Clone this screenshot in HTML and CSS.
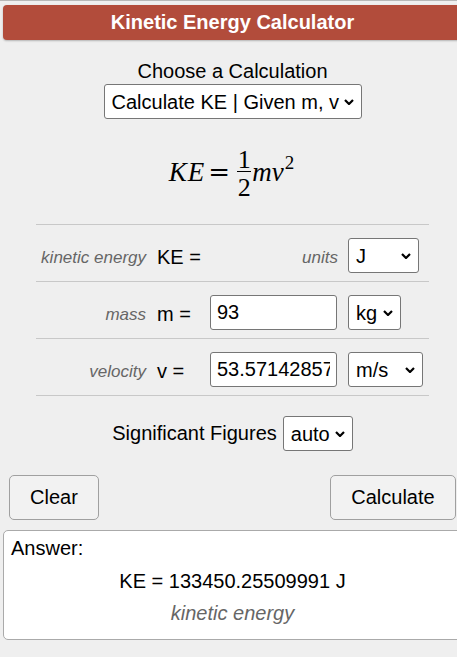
FILE: index.html
```html
<!DOCTYPE html>
<html>
<head>
<meta charset="utf-8">
<link rel="stylesheet" href="styles.css">
</head>
<body>
<div class="topline"></div>
<div class="calc">
  <div class="header">Kinetic Energy Calculator</div>
  <div class="choose">
    <div class="choose-label">Choose a Calculation</div>
    <select class="sel sel-calc"><option>Calculate KE | Given m, v</option></select>
  </div>
  <div class="formula">
    <span class="mi">K</span><span class="mi e">E</span><span class="eq">=</span><span class="frac"><span class="num">1</span><span class="bar"></span><span class="den">2</span></span><span class="mi m">m</span><span class="mi">v</span><sup class="sup">2</sup>
  </div>
  <div class="rows">
    <div class="row">
      <span class="lbl">kinetic energy</span>
      <span class="var">KE =</span>
      <span class="units-lbl">units</span>
      <select class="sel rsel sel-j"><option>J</option></select>
    </div>
    <div class="row">
      <span class="lbl">mass</span>
      <span class="var">m =</span>
      <input class="inp" type="text" value="93">
      <select class="sel rsel sel-kg"><option>kg</option></select>
    </div>
    <div class="row">
      <span class="lbl">velocity</span>
      <span class="var">v =</span>
      <input class="inp" type="text" value="53.571428571429">
      <select class="sel rsel sel-ms"><option>m/s</option></select>
    </div>
  </div>
  <div class="sig">
    <span>Significant Figures</span>
    <select class="sel sel-auto"><option>auto</option></select>
  </div>
  <div class="buttons">
    <button class="btn btn-clear">Clear</button>
    <button class="btn btn-calc">Calculate</button>
  </div>
  <div class="answer">
    <div class="ans-title">Answer:</div>
    <div class="ans-value">KE = 133450.25509991 J</div>
    <div class="ans-desc">kinetic energy</div>
  </div>
</div>
</body>
</html>
```
FILE: styles.css
```css
html, body {
  margin: 0;
  padding: 0;
  overflow: hidden;
}
body {
  background: #efefef;
  font-family: "Liberation Sans", Arial, sans-serif;
  color: #000;
  width: 457px;
  height: 657px;
}
.topline {
  height: 1px;
  background: #b8b8b8;
}
.calc {
  margin-left: 3px;
  margin-top: 4px;
  width: 459px;
}
.header {
  height: 35px;
  line-height: 35px;
  background: #b24c3b;
  color: #fff;
  font-weight: bold;
  font-size: 20px;
  text-align: center;
  border-radius: 4px;
  box-shadow: 0 1px 2px rgba(0,0,0,0.25);
}
.choose {
  margin-top: 20px;
  display: flex;
  flex-direction: column;
  align-items: center;
}
.choose-label {
  font-size: 20px;
  line-height: 23px;
}
.sel {
  -webkit-appearance: none;
  appearance: none;
  font-family: "Liberation Sans", Arial, sans-serif;
  font-size: 20px;
  height: 35px;
  color: #000;
  border: 1px solid #767676;
  border-radius: 3px;
  padding: 0 0 0 7px;
  background: #fff url("data:image/svg+xml;utf8,<svg xmlns='http://www.w3.org/2000/svg' width='10' height='6' viewBox='0 0 10 6'><path d='M1 1 L5 5 L9 1' fill='none' stroke='black' stroke-width='2.2'/></svg>") no-repeat right 7px center;
}
.sel-calc {
  width: 258px;
  margin-top: 1px;
  padding-left: 7px;
}
.formula {
  height: 105px;
  line-height: 105px;
  padding-top: 1px;
  box-sizing: border-box;
  text-align: center;
  font-family: "Liberation Serif", "Times New Roman", serif;
  font-size: 27px;
  white-space: nowrap;
  padding-right: 2px;
}
.mi {
  font-style: italic;
}
.mi.e {
  margin-left: 1px;
}
.mi.m {
  margin-left: 1px;
}
.eq {
  font-family: "DejaVu Serif", serif;
  font-size: 26px;
  margin: 0 7px 0 4px;
}
.frac {
  display: inline-flex;
  flex-direction: column;
  align-items: center;
  vertical-align: 13px;
  line-height: 19px;
  font-size: 26px;
}
.frac .bar {
  width: 14px;
  height: 1px;
  background: #000;
  margin: 2px 0 6px;
}
.sup {
  font-size: 19px;
  line-height: 0;
  vertical-align: 12px;
  margin-left: 1px;
}
.rows {
  margin: 0 0 0 33px;
  width: 393px;
  border-top: 1px solid #c8c8c8;
}
.row {
  display: grid;
  grid-template-columns: 121px 53px 138px 1fr;
  align-items: center;
  border-bottom: 1px solid #c8c8c8;
  padding-top: 5px;
  box-sizing: border-box;
  height: 57px;
}
.lbl, .var, .units-lbl {
  margin-top: 4px;
  white-space: nowrap;
}
.lbl {
  text-align: right;
  font-style: italic;
  color: #666;
  font-size: 17px;
  padding-right: 11px;
}
.var {
  font-size: 20px;
}
.units-lbl {
  text-align: right;
  font-style: italic;
  color: #666;
  font-size: 17px;
  padding-right: 10px;
}
.inp {
  font-family: "Liberation Sans", Arial, sans-serif;
  font-size: 20px;
  width: 127px;
  height: 35px;
  box-sizing: border-box;
  border: 1px solid #767676;
  border-radius: 3px;
  padding: 0 6px;
  background: #fff;
  color: #000;
}
.rsel {
  justify-self: start;
}
.sel-j { width: 71px; }
.sel-kg { width: 53px; }
.sel-ms { width: 75px; }
.sig {
  margin-top: 20px;
  display: flex;
  justify-content: center;
  align-items: center;
  gap: 6px;
  font-size: 20px;
}
.sel-auto {
  width: 70px;
}
.buttons {
  display: flex;
  justify-content: space-between;
  padding: 0 6px;
  margin-top: 24px;
}
.btn {
  font-family: "Liberation Sans", Arial, sans-serif;
  font-size: 20px;
  height: 45px;
  background: #f2f2f2;
  border: 1px solid #a0a0a0;
  border-radius: 5px;
  color: #000;
}
.btn-clear { width: 90px; }
.btn-calc { width: 126px; }
.answer {
  margin-top: 10px;
  background: #fff;
  border: 1px solid #aaa;
  border-radius: 5px;
  height: 110px;
  box-sizing: border-box;
  padding: 6px 0 0 7px;
  font-size: 20px;
}
.ans-title {
  line-height: 23px;
}
.ans-value {
  text-align: center;
  line-height: 23px;
  margin-top: 10px;
  padding-right: 7px;
}
.ans-desc {
  text-align: center;
  font-style: italic;
  color: #666;
  line-height: 23px;
  margin-top: 9px;
  padding-right: 7px;
}
```
